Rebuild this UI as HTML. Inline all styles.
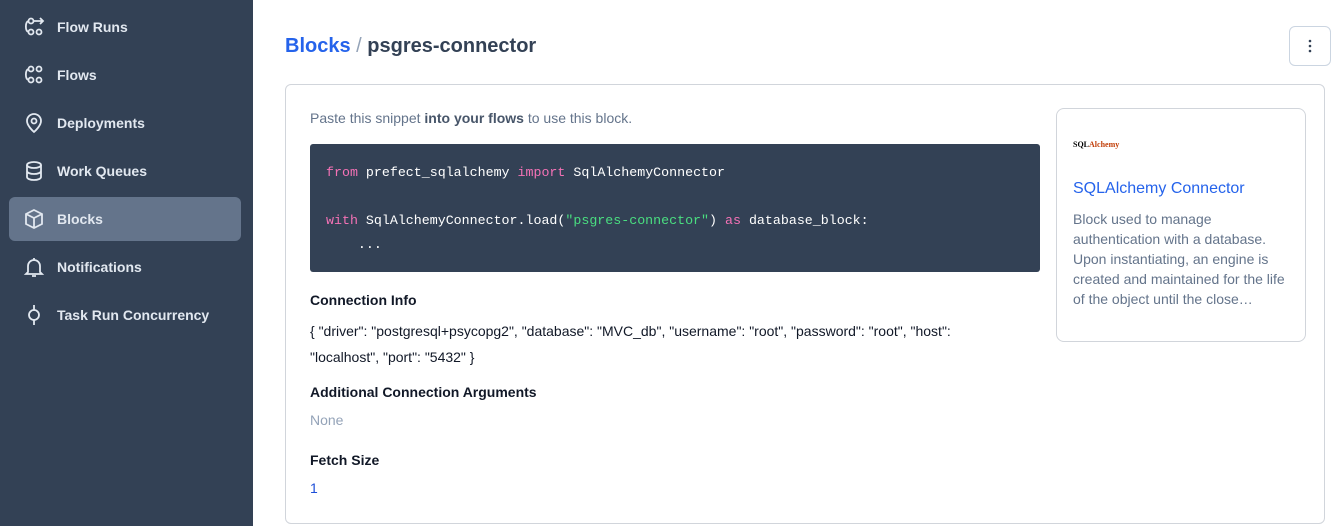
<!DOCTYPE html>
<html><head><meta charset="utf-8"><style>
*{box-sizing:border-box;margin:0;padding:0}
body{width:1333px;height:526px;overflow:hidden;font-family:"Liberation Sans",sans-serif;background:#fff;position:relative}
.side{position:absolute;left:0;top:0;width:253px;height:526px;background:#334155}
.item{position:absolute;left:9px;width:232px;height:44px;border-radius:6px;color:#e2e8f0;font-size:14px;font-weight:bold;display:flex;align-items:center;padding-left:48px}
.item svg{position:absolute;left:14px;top:11px}
.act{background:#64748b}
.main{position:absolute;left:253px;top:0;right:0;bottom:0}
h1{position:absolute;left:32px;top:35px;font-size:20px;font-weight:bold;color:#334155}
h1 a{color:#2563eb}
.kb{position:absolute;left:1036px;top:26px;width:42px;height:40px;border:1px solid #cbd5e1;border-radius:6px}
.card{position:absolute;left:32px;top:84px;width:1040px;height:440px;border:1px solid #d1d5db;border-radius:6px}
.t{position:absolute;font-size:14px;color:#111827}
.code{position:absolute;left:24px;top:59px;width:730px;height:128px;background:#334155;border-radius:3px;font-family:"Liberation Mono",monospace;font-size:13.3px;color:#fff;padding:17px 16px;line-height:24px;white-space:pre}
.k{color:#f472b6}.s{color:#4ade80}
.doc{position:absolute;left:770px;top:23px;width:250px;height:234px;border:1px solid #d1d5db;border-radius:8px}
</style></head><body>
<div class="side">
<div class="item" style="top:5px"><svg width="22" height="22" viewBox="0 0 22 22" fill="none" stroke="#e2e8f0" stroke-width="1.8"><circle cx="8" cy="5" r="2.5"/><circle cx="8" cy="16" r="2.5"/><circle cx="16" cy="16" r="2.5"/><path d="M10.5 5h9M17 2l3 3-3 3M5.5 5C2 6 2 15 5.5 16"/></svg>Flow Runs</div>
<div class="item" style="top:53px"><svg width="22" height="22" viewBox="0 0 22 22" fill="none" stroke="#e2e8f0" stroke-width="1.8"><circle cx="8" cy="5" r="2.5"/><circle cx="16" cy="5" r="2.5"/><circle cx="8" cy="16" r="2.5"/><circle cx="16" cy="16" r="2.5"/><path d="M5.5 5C2 6 2 15 5.5 16"/></svg>Flows</div>
<div class="item" style="top:101px"><svg width="22" height="22" viewBox="0 0 22 22" fill="none" stroke="#e2e8f0" stroke-width="1.8"><path d="M11 20s-7-6-7-11a7 7 0 0114 0c0 5-7 11-7 11z"/><circle cx="11" cy="9" r="2.5"/></svg>Deployments</div>
<div class="item" style="top:149px"><svg width="22" height="22" viewBox="0 0 22 22" fill="none" stroke="#e2e8f0" stroke-width="1.8"><ellipse cx="11" cy="5" rx="7" ry="3"/><path d="M4 5v12c0 1.7 3 3 7 3s7-1.3 7-3V5M4 11c0 1.7 3 3 7 3s7-1.3 7-3"/></svg>Work Queues</div>
<div class="item act" style="top:197px"><svg width="22" height="22" viewBox="0 0 22 22" fill="none" stroke="#e2e8f0" stroke-width="1.8"><path d="M11 2l8 4v10l-8 4-8-4V6zM3 6l8 4 8-4M11 10v10"/></svg>Blocks</div>
<div class="item" style="top:245px"><svg width="22" height="22" viewBox="0 0 22 22" fill="none" stroke="#e2e8f0" stroke-width="1.8"><path d="M5 16V10a6 6 0 0112 0v6l2 2H3zM9 20h4M11 2v2"/></svg>Notifications</div>
<div class="item" style="top:293px"><svg width="22" height="22" viewBox="0 0 22 22" fill="none" stroke="#e2e8f0" stroke-width="1.8"><circle cx="11" cy="11" r="5"/><path d="M11 1v5M11 16v5"/></svg>Task Run Concurrency</div>
</div>
<div class="main">
<h1><a>Blocks</a> <span style="color:#94a3b8;font-weight:normal">/</span> psgres-connector</h1>
<div class="kb"><svg width="40" height="38" viewBox="0 0 40 38"><circle cx="20" cy="14" r="1.3" fill="#334155"/><circle cx="20" cy="19" r="1.3" fill="#334155"/><circle cx="20" cy="24" r="1.3" fill="#334155"/></svg></div>
<div class="card">
<div class="t" style="left:24px;top:25px;color:#64748b">Paste this snippet <b style="color:#475569">into your flows</b> to use this block.</div>
<div class="code"><span class="k">from</span> prefect_sqlalchemy <span class="k">import</span> SqlAlchemyConnector

<span class="k">with</span> SqlAlchemyConnector.load(<span class="s">"psgres-connector"</span>) <span class="k">as</span> database_block:
    ...</div>
<div class="t" style="left:24px;top:207px;font-weight:bold">Connection Info</div>
<div class="t" style="left:24px;top:233px;font-size:14px;line-height:26px;width:700px">{ "driver": "postgresql+psycopg2", "database": "MVC_db", "username": "root", "password": "root", "host": "localhost", "port": "5432" }</div>
<div class="t" style="left:24px;top:299px;font-weight:bold">Additional Connection Arguments</div>
<div class="t" style="left:24px;top:327px;color:#94a3b8">None</div>
<div class="t" style="left:24px;top:367px;font-weight:bold">Fetch Size</div>
<div class="t" style="left:24px;top:395px;color:#1d4ed8">1</div>
<div class="doc">
<div style="position:absolute;left:16px;top:31px;font-family:'Liberation Serif',serif;font-size:8px;font-weight:bold"><span>SQL</span><span style="color:#c2410c">Alchemy</span></div>
<div style="position:absolute;left:16px;top:71px;font-size:16px;color:#2563eb">SQLAlchemy Connector</div>
<div style="position:absolute;left:16px;top:100px;width:215px;font-size:14px;line-height:20px;color:#64748b">Block used to manage authentication with a database. Upon instantiating, an engine is created and maintained for the life of the object until the close…</div>
</div>
</div>
</div>
</body></html>
